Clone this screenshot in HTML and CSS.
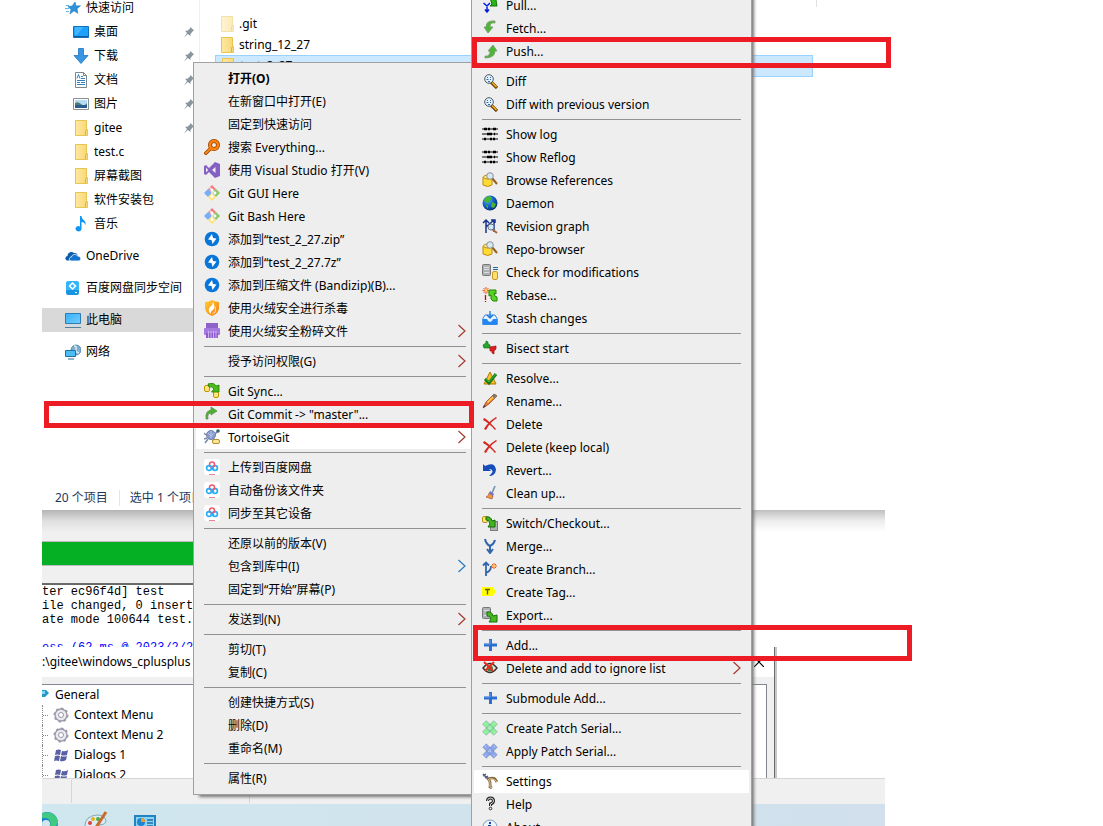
FILE: index.html
```html
<!DOCTYPE html>
<html lang="zh-CN">
<head>
    <title>gitee</title>
    <meta charset="utf-8">
    <link rel="stylesheet" href="styles.css">
</head>
<body>
<svg class="sprite" aria-hidden="true">
    <defs>
        <linearGradient id="gold" x1="0" y1="0" x2="1" y2="0"><stop offset="0" stop-color="#ffe9a0"/><stop offset="1" stop-color="#f8d775"/></linearGradient>
        <linearGradient id="screen" x1="0" y1="0" x2="1" y2="1"><stop offset="0" stop-color="#35b0fa"/><stop offset="1" stop-color="#73ccff"/></linearGradient>
        <linearGradient id="flame" x1="0" y1="0" x2="1" y2="1"><stop offset="0" stop-color="#ffcf2e"/><stop offset="1" stop-color="#f57c13"/></linearGradient>
        <radialGradient id="world" cx=".35" cy=".3" r=".8"><stop offset="0" stop-color="#58b4ff"/><stop offset=".5" stop-color="#1361c9"/><stop offset="1" stop-color="#06245e"/></radialGradient>
    </defs>
    <symbol id="star" viewBox="0 0 16 16"><path d="M10 2l1 4 4.500-.3-3.500 3 .8 4.500-3.800-2.400L5 14l1-4.500L3 6.500l4.300-.5z" fill="#2b93dc" stroke="#1b79bd" stroke-width=".6"/><path d="M1 5.500h3M0 8.500h4M1 11.500h3" stroke="#62b6ec"/></symbol>
    <symbol id="desktop" viewBox="0 0 16 16"><path d="M.5 2.500h15v11H.5z" fill="#1ea1fa" stroke="#1170b8"/><path d="M2 3l8 0-6 8H2z" fill="#43b6ff"/><path d="M1 12.500h14" stroke="#0c5e9f"/></symbol>
    <symbol id="download" viewBox="0 0 16 16"><path d="M5.500.5h5v7h4.500L8 15.500 1 7.500h4.500z" fill="#3a96e3" stroke="#1d75bd" stroke-width=".8"/></symbol>
    <symbol id="document" viewBox="0 0 16 16"><path d="M2.500.5h8l3 3v12h-11z" fill="#fff" stroke="#7d868d"/><path d="M10.500.5v3h3" fill="none" stroke="#7d868d"/><path d="M4 6.500l1.500-4 1.500 4M8 4.500h2M8 6.500h4M4 8.500h8M4 10.500h3M8 10.500h4M4 12.500h8" fill="none" stroke="#2f7fc1"/></symbol>
    <symbol id="picture" viewBox="0 0 16 16"><path d="M.5 2.500h15v11H.5z" fill="#fff" stroke="#8b8f93"/><path d="M2 4h12v8H2z" fill="#b4dcf5"/><path d="M2 7q3-2 6 1t6-1v2H2z" fill="#4d7d73"/><path d="M2 9h12v3H2z" fill="#2b5c91"/></symbol>
    <symbol id="folder" viewBox="0 0 16 16"><path d="M2.500.5h11v9h1v6h-12z" fill="url(#gold)" stroke="#e8c451"/><path d="M12.500 15v-4l1-1.500" fill="none" stroke="#e0b63b"/></symbol>
    <symbol id="music" viewBox="0 0 16 16"><path d="M7 0h1.500c0 4 5 4 4 9-.7-2-2-3-4-3v7a3 2.600 0 1 1-1.500-2.500z" fill="#0f96f2"/></symbol>
    <symbol id="cloud" viewBox="0 0 16 16"><path d="M4 12.500H2.500C-.6 12 0 8.500 2.500 8c0-4 4.500-5 6.500-3 2-.5 4 1 3.700 3z" fill="#0b5cab"/><path d="M6 13c-2.500-.5-2-4 .5-4 .5-3 5-3.500 6-1 3.500-.3 4.500 4.500 1.500 5z" fill="#1474cf" stroke="#fff" stroke-width=".8"/></symbol>
    <symbol id="sync" viewBox="0 0 16 16"><rect x="1" y="1" width="13" height="10" rx="2" fill="#35b6f8"/><path d="M1 10h13v3q0 2-2 2H3q-2 0-2-2z" fill="#1996e3"/><path d="M7.500 3l3 3-3 3-3-3z" fill="none" stroke="#fff" stroke-width="1.500"/><path d="M10 12.500h2" stroke="#fff"/></symbol>
    <symbol id="computer" viewBox="0 0 16 16"><path d="M.5 1.500h15v10H.5z" fill="url(#screen)" stroke="#2b7eb4"/><path d="M0 15.500h16" stroke="#547e9e"/><path d="M4 13.500h8" stroke="#c2dcec"/></symbol>
    <symbol id="network" viewBox="0 0 16 16"><circle cx="11" cy="6" r="5" fill="#7eaecb" stroke="#3c7191" stroke-width=".7"/><path d="M9 2q3 0 2 3t3 4" fill="none" stroke="#d5edf7" stroke-width="1.500"/><path d="M.5 6.500h10v6H.5z" fill="#4dbcf7" stroke="#226fa1"/><path d="M3 15h6" stroke="#226fa1"/></symbol>
    <symbol id="pin" viewBox="0 0 12 12"><path d="M7.500 1L11 4.500 9.500 5.500l-2 2.500v2L4.800 8 1 11.500 4 7 2 4.800h2.500L7 2.500z" fill="#87959f"/></symbol>
    <symbol id="search" viewBox="0 0 16 16"><path d="M1.800 14.200l4.500-4.500" stroke="#994000" stroke-width="3.500" stroke-linecap="round"/><circle cx="10" cy="6" r="4" fill="#eee" stroke="#994000" stroke-width="4"/><path d="M1.800 14.200l4.500-4.500" stroke="#ff8308" stroke-width="2" stroke-linecap="round"/><circle cx="10" cy="6" r="4" fill="none" stroke="#ff8308" stroke-width="2.500"/></symbol>
    <symbol id="vs" viewBox="0 0 16 16"><path d="M11 0l5 2v12l-5 2-6-6-3 3-2-1V4l2-1 3 3z" fill="#865fc5"/><path d="M2 5.500v5L4.200 8zM11.500 5v6L8 8z" fill="#eee"/></symbol>
    <symbol id="git" viewBox="0 0 16 16"><path d="M8 0l4 4-4 4-4-4z" fill="#f47d7d"/><path d="M4 4l4 4-4 4-4-4z" fill="#78aef8"/><path d="M12 4l4 4-4 4-4-4z" fill="#8ac766"/><path d="M8 8l4 4-4 4-4-4z" fill="#ffe17b"/><path d="M5.500 2.500L8 5v7M8 5l3 3" fill="none" stroke="#eee" stroke-width="1.300"/><circle cx="8" cy="5" r="1.500" fill="#fff"/><circle cx="11" cy="8" r="1.500" fill="#fff"/><circle cx="8" cy="11.500" r="1.500" fill="#fff"/></symbol>
    <symbol id="bandizip" viewBox="0 0 16 16"><circle cx="8" cy="8" r="7.300" fill="#0876d9"/><path d="M8 3L4 8.500l3.500.5L8.500 13l4-5.500-3.500-.5z" fill="#fff"/></symbol>
    <symbol id="shield" viewBox="0 0 16 16"><path d="M1 2q4 0 7-2 3 2 7 2v6q0 5-7 8-7-3-7-8z" fill="url(#flame)"/><path d="M9 2q0 3-3 5-3 4 1 7-1-3 2-4 3-3 0-8M11 6q2 5-3 8 5-1 4-6z" fill="#fff"/></symbol>
    <symbol id="shredder" viewBox="0 0 16 16"><path d="M2 0h12v5H2z" fill="#8f62c9"/><rect y="5" width="16" height="7" rx="1" fill="#a57ae0"/><path d="M2 10h12v5H2z" fill="#8e5bd0"/><path d="M4.500 8v7M7 8v7M9.500 8v7M12 8v7" stroke="#dac4f6" stroke-width=".8"/></symbol>
    <symbol id="gitsync" viewBox="0 0 16 16"><rect x=".5" y="2.500" width="5" height="6" rx="1.500" fill="#ffe878" stroke="#c39300"/><rect x="9.500" y="8.500" width="5" height="6" rx="1.500" fill="#ffe878" stroke="#c39300"/><path d="M4 1q6-2 8 2l3-1v7H7.500L10 6Q8 3 5 4z" fill="#48bd19" stroke="#217800" stroke-width=".8"/></symbol>
    <symbol id="commit" viewBox="0 0 16 16"><path d="M2 13Q1 5 7 4V1l6 4-6 4V7Q3 7 4 13z" fill="#46b52b" stroke="#668a5c" stroke-width=".8"/></symbol>
    <symbol id="tortoise" viewBox="0 0 16 16"><path d="M2 6L0 4M3 9l-3 1M4 10l-3 4M10 9l-1 3M11 5l3-3" stroke="#7a8aa3" stroke-width="1.500"/><ellipse cx="7" cy="6" rx="4.500" ry="4.500" fill="#879cca" stroke="#7084b3"/><path d="M4 4l3 3 3-3M7 2v7" fill="none" stroke="#b6c5e7"/><circle cx="14" cy="2" r="1.800" fill="#38657c"/><rect x="8.500" y="10.500" width="7" height="4" rx="1.500" fill="#ffe697" stroke="#b58c2c"/></symbol>
    <symbol id="baidu" viewBox="0 0 16 16"><rect width="16" height="16" rx="3" fill="#fff"/><circle cx="5" cy="9" r="2.400" fill="none" stroke="#29aff7" stroke-width="1.700"/><circle cx="11" cy="9" r="2.400" fill="none" stroke="#29aff7" stroke-width="1.700"/><circle cx="8" cy="5.500" r="2.500" fill="none" stroke="#ef596f" stroke-width="1.500"/><path d="M6 6.500L10 10" stroke="#29aff7" stroke-width="1.500"/><path d="M5 15.500h6" stroke="#ef8393"/></symbol>
    <symbol id="pull" viewBox="0 0 16 16"><path d="M1.500 6L5 9l3-3M5 8v7M3 12.500L5 15l2-2.500" fill="none" stroke="#001de6" stroke-width="1.500"/><path d="M8 1h4l3-1-1 3 1 6H8l2-2z" fill="#28b51a" stroke="#117500"/></symbol>
    <symbol id="fetch" viewBox="0 0 16 16"><path d="M13 3Q8 2 8 7h3l-5 6-4-6h2Q4 0 13 1z" fill="#4bb734" stroke="#789672" stroke-width=".8"/></symbol>
    <symbol id="push" viewBox="0 0 16 16"><path d="M3 13q5 1 5-5H6l5-6 4 6h-2q0 7-10 7z" fill="#4bb734" stroke="#789672" stroke-width=".8"/></symbol>
    <symbol id="diff" viewBox="0 0 16 16"><path d="M9 9l6 6" stroke="#6b4300" stroke-width="3.200"/><path d="M10 9.500l4.500 4.500" stroke="#f4ae24" stroke-width="1.500"/><circle cx="7" cy="6" r="4.300" fill="#e4f3ff" stroke="#4a5564"/><path d="M5 4.500h1M8 4.500h1M4.500 6.500h2M8 6.500h1M6 8.500h2" stroke="#3567ac"/></symbol>
    <symbol id="log" viewBox="0 0 16 16"><path d="M0 3h16M0 8h16M0 13h16" stroke="#000" stroke-width="1.200"/><path d="M2 3h3M6 3h2M11 3h3M5 8h5M12 8h1M2 13h2M8 13h2M11 13h2" stroke="#000" stroke-width="2.600"/></symbol>
    <symbol id="repo" viewBox="0 0 16 16"><path d="M1 5v8q5 3 9 0V5z" fill="#ffdb35" stroke="#c18a0d"/><ellipse cx="5.500" cy="5" rx="4" ry="2" fill="#fff08c" stroke="#c18a0d"/><path d="M10 6l5 6" stroke="#946125" stroke-width="2"/><circle cx="8" cy="4" r="3.300" fill="#d8e8f2" stroke="#8b9197"/></symbol>
    <symbol id="globe" viewBox="0 0 16 16"><circle cx="8" cy="8" r="7.500" fill="url(#world)"/><path d="M4 2q4-2 6 1L8 6 6 8 3 7 2 5zM10 7l4 2-2 4-3-1zM3 9l3 2v3z" fill="#48b72d"/></symbol>
    <symbol id="graph" viewBox="0 0 16 16"><path d="M4 15V3M1 5l3-3 3 3M4 9l8-7M12 14V2M9 2h4v3" fill="none" stroke="#16368f" stroke-width="1.500"/><path d="M10 11l5 4" stroke="#a76b43" stroke-width="2"/><circle cx="9" cy="9" r="3" fill="#cfe6f5" stroke="#6a7683"/></symbol>
    <symbol id="check" viewBox="0 0 16 16"><rect x=".5" y=".5" width="8" height="11" rx="1" fill="#aeb1b3" stroke="#777"/><path d="M2 3.500h5M2 5.500h5M2 8.500h5" stroke="#ddd"/><path d="M11 3.500h5M11 5.500h5" stroke="#1d6c9d"/><rect x="10.500" y="7.500" width="5" height="8" rx="1.500" fill="#ffdf67" stroke="#c69a29"/></symbol>
    <symbol id="rebase" viewBox="0 0 16 16"><path d="M4 0v7M.5 3.500h7M1.500 1l5 5M6.500 1l-5 5" stroke="#f44d21"/><circle cx="4" cy="3.500" r="1.300" fill="#ffe45c"/><path d="M3.500 8v5M3.500 14v1" stroke="#d00" stroke-width="1.300"/><path d="M7 3h7v4l-2-1q0 4 3 4v4H11q-3-1-2-6L7 9z" fill="#55d426" stroke="#258600"/></symbol>
    <symbol id="stash" viewBox="0 0 16 16"><path d="M.7 9L3 5h10l2.300 4v5.500H.7z" fill="#e7f2ff" stroke="#3288e7"/><path d="M1 9h4q1 3 3 3t3-3h4v5H1z" fill="#2387f3"/><path d="M8 1v6M5 5l3 3 3-3" fill="none" stroke="#1779d7" stroke-width="1.300"/></symbol>
    <symbol id="bisect" viewBox="0 0 16 16"><path d="M1 5l3-2V1l2 1v2l2 1v3H2z" fill="#28a62c" stroke="#127019" stroke-width=".7"/><path d="M8 7l6-1v3l-2 2v3l-2-1v-2H8z" fill="#dc2020" stroke="#9e1010" stroke-width=".7"/></symbol>
    <symbol id="resolve" viewBox="0 0 16 16"><path d="M8 2l6 12H2z" fill="#fabd2d" stroke="#b87500"/><path d="M3 9l4 4 7-9" fill="none" stroke="#147c17" stroke-width="3"/><path d="M3 8l4 4 7-8" fill="none" stroke="#37bd35"/></symbol>
    <symbol id="rename" viewBox="0 0 16 16"><path d="M1 15l3-6 8-8 3 2-8 8z" fill="#ee7930" stroke="#8a4322" stroke-width=".7"/><path d="M5 9l7-7 1 1-7 7" fill="#ffd451"/><path d="M10 3l2-2 3 1-3 3z" fill="#767a80"/><path d="M1 15l1-3 2 1z" fill="#533"/></symbol>
    <symbol id="delete" viewBox="0 0 16 16"><path d="M2 2q2 0 12 11l-1 1Q7 7 1 4zM14 1l1 1Q8 6 4 14l-2-1Q6 6 14 1z" fill="#d62721"/></symbol>
    <symbol id="revert" viewBox="0 0 16 16"><path d="M1 2l2 2q10-5 11 4-1 6-7 6 7-6 0-7L9 9H1z" fill="#164cbb"/></symbol>
    <symbol id="clean" viewBox="0 0 16 16"><path d="M13 1l-3 7" stroke="#7994af" stroke-width="1.700"/><path d="M7 8l4 3-1 3-6-2q3-1 3-4z" fill="#f39546" stroke="#a25726" stroke-width=".7"/><path d="M8 6l4 3-1 2-4-3z" fill="#7370c5"/></symbol>
    <symbol id="switch" viewBox="0 0 16 16"><rect x=".5" y="1.500" width="5" height="6" rx="1.500" fill="#ffe66c" stroke="#b89220"/><rect x="8.500" y="6.500" width="7" height="9" fill="#aeb3b2" stroke="#7a7e7e"/><path d="M4 2q5-1 6 4l3-1v7H6l2-3Q7 4 4 5z" fill="#43b51c" stroke="#156b0a"/></symbol>
    <symbol id="merge" viewBox="0 0 16 16"><path d="M3 1q1 5 5 7v7M13 2q-1 4-5 6M5 11l3 4 3-4" fill="none" stroke="#3266ac" stroke-width="2"/></symbol>
    <symbol id="branch" viewBox="0 0 16 16"><path d="M4 15V2M1 4.500l3-3 3 3M4 12q5-2 5-7" fill="none" stroke="#3266ac" stroke-width="1.800"/><path d="M12 2v6M9 5h6M10 3l4 4M14 3l-4 4" stroke="#ef5424"/><circle cx="12" cy="5" r="1.300" fill="#ffc847"/></symbol>
    <symbol id="tag" viewBox="0 0 16 16"><path d="M0 3h11l3 4.500-3 4.500H0z" fill="#ff0"/><path d="M3 5.500h5M5.500 5.500v5" stroke="#685800" stroke-width="1.400"/></symbol>
    <symbol id="export" viewBox="0 0 16 16"><rect x=".5" y=".5" width="8" height="11" rx="1" fill="#adb2b4" stroke="#75797c"/><path d="M2 3.500h5M2 8.500h5" stroke="#ddd"/><path d="M5 5q5-1 6 4l4-1v7H7l2-3Q8 8 5 9z" fill="#48b91c" stroke="#176d0a"/></symbol>
    <symbol id="add" viewBox="0 0 16 16"><path d="M8.500 2v12M2 8h13" stroke="#2d6fd0" stroke-width="3"/><path d="M8 3v4H3" fill="none" stroke="#6ba0eb"/></symbol>
    <symbol id="ignore" viewBox="0 0 16 16"><path d="M1 8q7-9 14 0-7 9-14 0z" fill="#e7e3dc" stroke="#333" stroke-width="1.400"/><circle cx="8" cy="8.500" r="3" fill="#417f44"/><path d="M2 2l9 9M12 2l-9 9" stroke="#e62c1c" stroke-width="2"/></symbol>
    <symbol id="patch" viewBox="0 0 16 16"><g fill="currentColor" stroke="#6b8090" stroke-opacity=".6" stroke-width=".7"><path d="M4.300.7l4 4-3.600 3.600-4-4zM11.700.7l3.600 3.600-4 4-3.600-3.600zM4.700 7.700l3.600 3.600-4 4-3.600-3.600zM11.300 7.700l4 4-3.600 3.600-4-4z"/><path d="M8 4.500L11.500 8 8 11.500 4.500 8z"/></g><path d="M3 4l1-1M12 3l1 1M3 12l1 1M12 12l1 1" stroke="#fff" stroke-opacity=".5"/><path d="M8 6v4M6 8h4" stroke="#fff" stroke-opacity=".5" stroke-dasharray="1 1"/></symbol>
    <symbol id="tools" viewBox="0 0 16 16"><path d="M1 1l5 5M1 3l3-2M3 5l3-2" stroke="#4c5b87" stroke-width="1.500"/><path d="M5 5q4 2 3 9l2 1M6 6q5-2 7 0l2 3" fill="none" stroke="#846843" stroke-width="2.700"/><path d="M6 6q3 2 2 8l2 1M7 6q4-1 6 1l2 2" fill="none" stroke="#e2c389"/></symbol>
    <symbol id="help" viewBox="0 0 16 16"><path d="M5.500 5q0-3 3-3t3 3q0 2-3 3v2" fill="none" stroke="#222" stroke-width="3"/><path d="M5.500 5q0-3 3-3t3 3q0 2-3 3v2" fill="none" stroke="#ddd"/><circle cx="8.500" cy="12.500" r="1.300" fill="#fff" stroke="#222"/></symbol>
    <symbol id="info" viewBox="0 0 16 16"><circle cx="8" cy="8" r="7" fill="#eaf4ff" stroke="#8499b6"/><path d="M8 3v2M6 7h2v5M6 12h4" fill="none" stroke="#1742ab" stroke-width="2"/></symbol>
    <symbol id="arrow" viewBox="0 0 8 14"><path d="M.5 1L7 7 .5 13" fill="none" stroke="currentColor" stroke-width="1.200"/></symbol>
    <symbol id="general" viewBox="0 0 16 16"><path d="M8 3h5l3 3-4 4H8z" fill="#2499c7"/><path d="M9 4h3v3H9z" fill="#84d5ef"/></symbol>
    <symbol id="gear" viewBox="0 0 16 16"><circle cx="8" cy="8" r="6" fill="#e9e9ef" stroke="#9a9aa9" stroke-width="1.300"/><circle cx="8" cy="8" r="6.700" fill="none" stroke="#9a9aa9" stroke-width="1.600" stroke-dasharray="2.600 2.600"/><circle cx="8" cy="8" r="2.500" fill="#fff" stroke="#9a9aa9"/></symbol>
    <symbol id="flag" viewBox="0 0 16 16"><path d="M3 3q3-1 5 0L7 8Q4 7 2 8zM9 4q3 1 6-1l-1 5q-3 1-6 0zM2 9q3-1 5 0l-1 5q-3-1-5 0zM8 9q3 1 6 0l-1 4q-3 2-6 1z" fill="#5960a3"/></symbol>
    <symbol id="edge" viewBox="0 0 24 24"><circle cx="12" cy="12" r="11" fill="#1684cc"/><path d="M2 8Q7-1 16 2q7 3 7 10-2 5-8 3 2-7-5-8-5 0-8 3z" fill="#40c983"/><circle cx="11" cy="13" r="4" fill="#d3e6ee"/></symbol>
    <symbol id="paint" viewBox="0 0 24 24"><path d="M1 15Q1 5 13 4q9 0 9 7-2 3-7 3 2 7-4 9-9 0-10-8z" fill="#d8edf5" stroke="#84a6ba"/><circle cx="6" cy="12" r="2" fill="#e73e3e"/><circle cx="9" cy="8" r="2" fill="#e7b21c"/><circle cx="14" cy="8" r="2" fill="#49ad4a"/><circle cx="6" cy="17" r="2" fill="#3575d0"/><path d="M11 18L22 1" stroke="#c66c2c" stroke-width="3"/></symbol>
    <symbol id="control" viewBox="0 0 24 24"><path d="M2 5h20v16H2z" fill="#8bd4f7" stroke="#2284bd" stroke-width="2"/><circle cx="8" cy="11" r="4" fill="#1c86d1"/><path d="M8 11V7a4 4 0 0 1 4 4z" fill="#f29a2e"/><path d="M14 9h6M14 12h6M14 15h6" stroke="#1c6eaa" stroke-width="1.500"/></symbol>
</svg>

<div class="desktop">
    <section class="explorer">
        <div class="explorer-body">
            <nav class="sidebar">
                <a href="#" class="root"><svg class="icon"><use href="#star"/></svg>快速访问</a>
                <a href="#"><svg class="icon"><use href="#desktop"/></svg>桌面<svg class="pin"><use href="#pin"/></svg></a>
                <a href="#"><svg class="icon"><use href="#download"/></svg>下载<svg class="pin"><use href="#pin"/></svg></a>
                <a href="#"><svg class="icon"><use href="#document"/></svg>文档<svg class="pin"><use href="#pin"/></svg></a>
                <a href="#"><svg class="icon"><use href="#picture"/></svg>图片<svg class="pin"><use href="#pin"/></svg></a>
                <a href="#"><svg class="icon"><use href="#folder"/></svg>gitee<svg class="pin"><use href="#pin"/></svg></a>
                <a href="#"><svg class="icon"><use href="#folder"/></svg>test.c</a>
                <a href="#"><svg class="icon"><use href="#folder"/></svg>屏幕截图</a>
                <a href="#"><svg class="icon"><use href="#folder"/></svg>软件安装包</a>
                <a href="#"><svg class="icon"><use href="#music"/></svg>音乐</a>
                <a href="#" class="root group"><svg class="icon"><use href="#cloud"/></svg>OneDrive</a>
                <a href="#" class="root group"><svg class="icon"><use href="#sync"/></svg>百度网盘同步空间</a>
                <a href="#" class="root group current"><svg class="icon"><use href="#computer"/></svg>此电脑</a>
                <a href="#" class="root group"><svg class="icon"><use href="#network"/></svg>网络</a>
            </nav>
            <div class="files">
                <div class="file hidden-file"><svg class="icon"><use href="#folder"/></svg>.git</div>
                <div class="file"><svg class="icon"><use href="#folder"/></svg>string_12_27</div>
                <div class="file selected"><svg class="icon"><use href="#folder"/></svg>test_2_27</div>
            </div>
            <div class="column-edge"></div>
        </div>
        <footer class="status"><span>20 个项目</span><span>选中 1 个项目</span></footer>
    </section>

    <section class="progress">
        <div class="bar"></div>
        <div class="console">
            <div>ter ec96f4d] test</div>
            <div>ile changed, 0 insertions(+)</div>
            <div>ate mode 100644 test.c</div>
            <div class="result">ess (62 ms @ 2023/2/27)</div>
        </div>
    </section>

    <section class="settings">
        <header><span>:\gitee\windows_cplusplus</span><button type="button" aria-label="关闭"><svg viewBox="0 0 10 10"><path d="M0 0l10 10M10 0L0 10" stroke="#000" stroke-width="1.200"/></svg></button></header>
        <ul class="tree">
            <li class="top"><svg class="icon"><use href="#general"/></svg>General</li>
            <li><svg class="icon"><use href="#gear"/></svg>Context Menu</li>
            <li><svg class="icon"><use href="#gear"/></svg>Context Menu 2</li>
            <li><svg class="icon"><use href="#flag"/></svg>Dialogs 1</li>
            <li><svg class="icon"><use href="#flag"/></svg>Dialogs 2</li>
        </ul>
    </section>
    <div class="strip"><span></span><span></span></div>
    <footer class="taskbar">
        <svg><use href="#edge"/></svg>
        <svg><use href="#paint"/></svg>
        <svg><use href="#control"/></svg>
    </footer>
</div>

<menu class="menu context">
    <li><button type="button" class="default">打开(O)</button></li>
    <li><button type="button">在新窗口中打开(E)</button></li>
    <li><button type="button">固定到快速访问</button></li>
    <li><button type="button"><svg class="icon"><use href="#search"/></svg>搜索 Everything...</button></li>
    <li><button type="button"><svg class="icon"><use href="#vs"/></svg>使用 Visual Studio 打开(V)</button></li>
    <li><button type="button"><svg class="icon"><use href="#git"/></svg>Git GUI Here</button></li>
    <li><button type="button"><svg class="icon"><use href="#git"/></svg>Git Bash Here</button></li>
    <li><button type="button"><svg class="icon"><use href="#bandizip"/></svg>添加到“test_2_27.zip”</button></li>
    <li><button type="button"><svg class="icon"><use href="#bandizip"/></svg>添加到“test_2_27.7z”</button></li>
    <li><button type="button"><svg class="icon"><use href="#bandizip"/></svg>添加到压缩文件 (Bandizip)(B)...</button></li>
    <li><button type="button"><svg class="icon"><use href="#shield"/></svg>使用火绒安全进行杀毒</button></li>
    <li><button type="button"><svg class="icon"><use href="#shredder"/></svg>使用火绒安全粉碎文件<svg class="arrow"><use href="#arrow"/></svg></button></li>
    <li class="separator"></li>
    <li><button type="button">授予访问权限(G)<svg class="arrow"><use href="#arrow"/></svg></button></li>
    <li class="separator"></li>
    <li><button type="button"><svg class="icon"><use href="#gitsync"/></svg>Git Sync...</button></li>
    <li><button type="button"><svg class="icon"><use href="#commit"/></svg>Git Commit -&gt; "master"...</button></li>
    <li><button type="button" class="active"><svg class="icon"><use href="#tortoise"/></svg>TortoiseGit<svg class="arrow"><use href="#arrow"/></svg></button></li>
    <li class="separator"></li>
    <li><button type="button"><svg class="icon"><use href="#baidu"/></svg>上传到百度网盘</button></li>
    <li><button type="button"><svg class="icon"><use href="#baidu"/></svg>自动备份该文件夹</button></li>
    <li><button type="button"><svg class="icon"><use href="#baidu"/></svg>同步至其它设备</button></li>
    <li class="separator"></li>
    <li><button type="button">还原以前的版本(V)</button></li>
    <li><button type="button">包含到库中(I)<svg class="arrow blue"><use href="#arrow"/></svg></button></li>
    <li><button type="button">固定到“开始”屏幕(P)</button></li>
    <li class="separator"></li>
    <li><button type="button">发送到(N)<svg class="arrow"><use href="#arrow"/></svg></button></li>
    <li class="separator"></li>
    <li><button type="button">剪切(T)</button></li>
    <li><button type="button">复制(C)</button></li>
    <li class="separator"></li>
    <li><button type="button">创建快捷方式(S)</button></li>
    <li><button type="button">删除(D)</button></li>
    <li><button type="button">重命名(M)</button></li>
    <li class="separator"></li>
    <li><button type="button">属性(R)</button></li>
</menu>

<menu class="menu submenu">
    <li><button type="button"><svg class="icon"><use href="#pull"/></svg>Pull...</button></li>
    <li><button type="button"><svg class="icon"><use href="#fetch"/></svg>Fetch...</button></li>
    <li><button type="button"><svg class="icon"><use href="#push"/></svg>Push...</button></li>
    <li class="separator"></li>
    <li><button type="button"><svg class="icon"><use href="#diff"/></svg>Diff</button></li>
    <li><button type="button"><svg class="icon"><use href="#diff"/></svg>Diff with previous version</button></li>
    <li class="separator"></li>
    <li><button type="button"><svg class="icon"><use href="#log"/></svg>Show log</button></li>
    <li><button type="button"><svg class="icon"><use href="#log"/></svg>Show Reflog</button></li>
    <li><button type="button"><svg class="icon"><use href="#repo"/></svg>Browse References</button></li>
    <li><button type="button"><svg class="icon"><use href="#globe"/></svg>Daemon</button></li>
    <li><button type="button"><svg class="icon"><use href="#graph"/></svg>Revision graph</button></li>
    <li><button type="button"><svg class="icon"><use href="#repo"/></svg>Repo-browser</button></li>
    <li><button type="button"><svg class="icon"><use href="#check"/></svg>Check for modifications</button></li>
    <li><button type="button"><svg class="icon"><use href="#rebase"/></svg>Rebase...</button></li>
    <li><button type="button"><svg class="icon"><use href="#stash"/></svg>Stash changes</button></li>
    <li class="separator"></li>
    <li><button type="button"><svg class="icon"><use href="#bisect"/></svg>Bisect start</button></li>
    <li class="separator"></li>
    <li><button type="button"><svg class="icon"><use href="#resolve"/></svg>Resolve...</button></li>
    <li><button type="button"><svg class="icon"><use href="#rename"/></svg>Rename...</button></li>
    <li><button type="button"><svg class="icon"><use href="#delete"/></svg>Delete</button></li>
    <li><button type="button"><svg class="icon"><use href="#delete"/></svg>Delete (keep local)</button></li>
    <li><button type="button"><svg class="icon"><use href="#revert"/></svg>Revert...</button></li>
    <li><button type="button"><svg class="icon"><use href="#clean"/></svg>Clean up...</button></li>
    <li class="separator"></li>
    <li><button type="button"><svg class="icon"><use href="#switch"/></svg>Switch/Checkout...</button></li>
    <li><button type="button"><svg class="icon"><use href="#merge"/></svg>Merge...</button></li>
    <li><button type="button"><svg class="icon"><use href="#branch"/></svg>Create Branch...</button></li>
    <li><button type="button"><svg class="icon"><use href="#tag"/></svg>Create Tag...</button></li>
    <li><button type="button"><svg class="icon"><use href="#export"/></svg>Export...</button></li>
    <li class="separator"></li>
    <li><button type="button"><svg class="icon"><use href="#add"/></svg>Add...</button></li>
    <li><button type="button"><svg class="icon"><use href="#ignore"/></svg>Delete and add to ignore list<svg class="arrow"><use href="#arrow"/></svg></button></li>
    <li class="separator"></li>
    <li><button type="button"><svg class="icon"><use href="#add"/></svg>Submodule Add...</button></li>
    <li class="separator"></li>
    <li><button type="button"><svg class="icon green"><use href="#patch"/></svg>Create Patch Serial...</button></li>
    <li><button type="button"><svg class="icon violet"><use href="#patch"/></svg>Apply Patch Serial...</button></li>
    <li class="separator"></li>
    <li><button type="button" class="active"><svg class="icon"><use href="#tools"/></svg>Settings</button></li>
    <li><button type="button"><svg class="icon"><use href="#help"/></svg>Help</button></li>
    <li><button type="button"><svg class="icon"><use href="#info"/></svg>About</button></li>
</menu>

<div class="mark mark-push"></div>
<div class="mark mark-commit"></div>
<div class="mark mark-add"></div>
</body>
</html>
```

FILE: styles.css
```css
body {
    position: relative;
    margin: 0;
    height: 100vh;
    overflow: hidden;
    background: #fff;
    color: #000;
    font: 12px/16px "Noto Sans", "Noto Sans CJK SC", sans-serif;
}

.sprite {
    position: absolute;
    width: 0;
    height: 0;
}

.icon {
    flex: none;
    width: 16px;
    height: 16px;
}

.desktop {
    display: flex;
    flex-direction: column;
    height: 100%;
    margin: 0 218px 0 42px;
    overflow: hidden;
}

/* explorer */
.explorer {
    position: relative;
    flex: none;
    background: #fff;
}

.explorer::after {
    content: "";
    position: absolute;
    top: 100%;
    left: 0;
    right: 0;
    height: 22px;
    background: linear-gradient(rgba(0, 0, 0, .25), rgba(0, 0, 0, .07) 50%, transparent);
}

.explorer-body {
    display: flex;
    padding-bottom: 120px;
}

.sidebar {
    flex: none;
    width: 157px;
    margin-top: -4px;
    border-right: 1px solid #f0f0f0;
}

.sidebar a {
    display: flex;
    align-items: center;
    height: 24px;
    padding-left: 31px;
    gap: 5px;
    color: #000;
    text-decoration: none;
}

.sidebar .root {
    padding-left: 23px;
}

.sidebar .group {
    margin-top: 8px;
}

.sidebar .current {
    background: #d9d9d9;
}

.pin {
    width: 12px;
    height: 12px;
    margin-left: auto;
    margin-right: 4px;
}

.files {
    flex: 1;
    padding: 13px 0 0 15px;
}

.file {
    display: flex;
    align-items: center;
    height: 21px;
    box-sizing: border-box;
    padding-left: 4px;
    gap: 4px;
}

.file.hidden-file .icon {
    opacity: .5;
}

.file.selected {
    height: 22px;
    border: 1px solid #99d1ff;
    background: #cce8ff;
}

.column-edge {
    width: 68px;
    height: 7px;
    border-left: 1px solid #e0e0e0;
    margin-left: 3px;
}

.status {
    display: flex;
    align-items: center;
    height: 24px;
    padding-top: 2px;
    padding-left: 13px;
    color: #1e395b;
}

.status span + span {
    margin-left: 11px;
    padding-left: 10px;
    border-left: 1px solid #e5e5e5;
}

/* commit progress window */
.progress {
    flex: none;
    width: 60%;
    padding-top: 31px;
    background: #f0f0f0;
}

.bar {
    height: 23px;
    border: 1px solid #bcbcbc;
    border-width: 1px 0;
    background: #06b025;
}

.console {
    height: 62px;
    margin-top: 17px;
    overflow: hidden;
    border-top: 2px solid #696969;
    background: #fff;
    font: 12px/14px "Liberation Mono", monospace;
}

.console div {
    white-space: pre;
}

.console .result {
    margin-top: 14px;
    color: #00f;
}

/* settings window */
.settings {
    flex: none;
    display: flex;
    flex-direction: column;
    width: 733px;
    height: 131px;
    box-sizing: border-box;
    border-right: 1px solid #6b6b6b;
    background: #f0f0f0;
    box-shadow: 2px 0 0 #c8c8c8;
}

.settings header {
    display: flex;
    align-items: center;
    justify-content: space-between;
    flex: none;
    height: 30px;
    padding-right: 10px;
    background: #fff;
}

.settings button {
    padding: 0;
    border: 0;
    background: none;
}

.settings button svg {
    display: block;
    width: 10px;
    height: 10px;
}

.tree {
    flex: 1;
    margin: 7px 7px 0 0;
    padding: 0;
    overflow: hidden;
    border: 1px solid #828790;
    border-width: 1px 1px 0 0;
    background: #fff;
    list-style: none;
}

.tree li {
    display: flex;
    align-items: center;
    height: 20px;
    gap: 5px;
    border-left: 1px dotted #888;
}

.tree li:not(.top)::before {
    content: "";
    width: 5px;
    border-top: 1px dotted #888;
}

.tree .top {
    margin-left: -9px;
    border: 0;
    gap: 6px;
}

.strip {
    flex: none;
    display: flex;
    height: 23px;
    padding: 1px 0;
    border-top: 1px solid #d5d5d5;
    background: #f0f0f0;
}

.strip span {
    width: 29px;
    border-right: 1px solid #d5d5d5;
}

.strip span + span {
    width: 177px;
}

.taskbar {
    flex: 1;
    display: flex;
    gap: 25px;
    padding-top: 7px;
    background: linear-gradient(90deg, #d0e7ef, #d1e0ec);
}

.taskbar svg {
    flex: none;
    width: 24px;
    height: 24px;
}

.taskbar svg:first-child {
    margin-left: -7px;
}

/* menus */
.menu {
    position: absolute;
    z-index: 1;
    box-sizing: border-box;
    margin: 0;
    padding: 4px 0;
    border: 1px solid #a0a0a0;
    background: #eee;
    list-style: none;
    box-shadow: 4px 4px 3px -2px #777;
}

.context {
    top: 62px;
    left: 193px;
    width: 280px;
}

.submenu {
    top: -11px;
    left: 471px;
    width: 281px;
}

.menu button {
    display: flex;
    align-items: center;
    width: 100%;
    height: 23px;
    padding: 0 0 0 34px;
    border: 0;
    background: none;
    color: #000;
    font: inherit;
    text-align: left;
    white-space: nowrap;
}

.menu .icon {
    margin: 0 8px 1px -24px;
}

.menu .default {
    font-weight: bold;
}

.menu .active {
    background: #fff;
}

.context .active {
    width: auto;
    margin-left: 2px;
    padding-left: 32px;
    min-width: calc(100% - 2px);
}

.menu .separator {
    height: 1px;
    margin: 3px 6px 3px 10px;
    background: #919191;
}

.menu .arrow {
    width: 8px;
    height: 14px;
    margin: 0 6px 1px auto;
    color: #a33a2c;
}

.menu .arrow.blue {
    color: #2878bd;
}

.submenu .active {
    width: auto;
    min-width: calc(100% - 4px);
    margin: 0 2px;
    padding-left: 32px;
}

.submenu .separator,
.submenu .arrow {
    margin-right: 10px;
}

.green {
    color: #8cf09a;
}

.violet {
    color: #8ca6ef;
}

/* red highlights */
.mark {
    position: absolute;
    z-index: 2;
    box-sizing: border-box;
    border: 5px solid #ed1c24;
    pointer-events: none;
}

.mark-push {
    top: 37px;
    left: 472px;
    width: 419px;
    height: 31px;
}

.mark-commit {
    top: 401px;
    left: 44px;
    width: 430px;
    height: 27px;
}

.mark-add {
    top: 625px;
    left: 473px;
    width: 439px;
    height: 36px;
}
```
